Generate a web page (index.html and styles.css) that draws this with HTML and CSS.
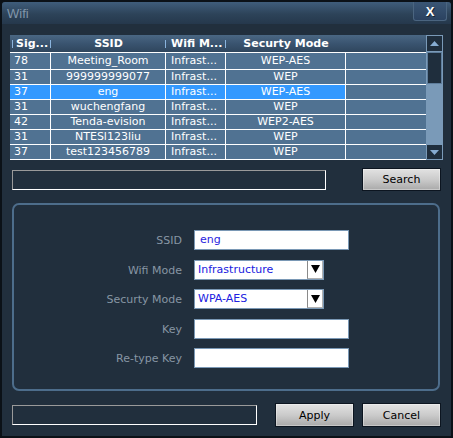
FILE: index.html
```html
<!DOCTYPE html>
<html>
<head>
<meta charset="utf-8">
<link rel="stylesheet" href="styles.css">
</head>
<body>
<div class="window">
  <div class="titlebar">
    <span class="title">Wifi</span>
    <div class="close">X</div>
  </div>
  <div class="content">
    <div class="list">
      <div class="grid">
        <div class="row head">
          <div class="c c1">Sig...</div>
          <div class="c c2">SSID</div>
          <div class="c c3">Wifi M...</div>
          <div class="c c4">Securty Mode</div>
          <div class="c c5"></div>
        </div>
        <div class="row first">
          <div class="c c1">78</div><div class="c c2">Meeting_Room</div><div class="c c3">Infrast...</div><div class="c c4">WEP-AES</div><div class="c c5"></div>
        </div>
        <div class="row">
          <div class="c c1">31</div><div class="c c2">999999999077</div><div class="c c3">Infrast...</div><div class="c c4">WEP</div><div class="c c5"></div>
        </div>
        <div class="row sel">
          <div class="c c1">37</div><div class="c c2">eng</div><div class="c c3">Infrast...</div><div class="c c4">WEP-AES</div><div class="c c5"></div>
        </div>
        <div class="row">
          <div class="c c1">31</div><div class="c c2">wuchengfang</div><div class="c c3">Infrast...</div><div class="c c4">WEP</div><div class="c c5"></div>
        </div>
        <div class="row">
          <div class="c c1">42</div><div class="c c2">Tenda-evision</div><div class="c c3">Infrast...</div><div class="c c4">WEP2-AES</div><div class="c c5"></div>
        </div>
        <div class="row">
          <div class="c c1">31</div><div class="c c2">NTESl123liu</div><div class="c c3">Infrast...</div><div class="c c4">WEP</div><div class="c c5"></div>
        </div>
        <div class="row">
          <div class="c c1">37</div><div class="c c2">test123456789</div><div class="c c3">Infrast...</div><div class="c c4">WEP</div><div class="c c5"></div>
        </div>
      </div>
      <div class="scrollbar">
        <div class="sb-btn up"><svg width="9" height="5" viewBox="0 0 9 5"><path d="M0 5 L4.5 0 L9 5 Z" fill="#86acd2"/></svg></div>
        <div class="sb-track"><div class="sb-thumb"></div></div>
        <div class="sb-btn down"><svg width="9" height="5" viewBox="0 0 9 5"><path d="M0 0 L4.5 5 L9 0 Z" fill="#86acd2"/></svg></div>
      </div>
    </div>

    <div class="search-row">
      <div class="sunken search-field"></div>
      <div class="btn">Search</div>
    </div>

    <div class="group">
      <div class="label">SSID</div>
      <div class="input">eng</div>
      <div class="label">Wifi Mode</div>
      <div class="select"><span class="val">Infrastructure</span><span class="dd"><svg width="9" height="8" viewBox="0 0 9 8"><path d="M0 0 H9 L4.5 8 Z" fill="#000"/></svg></span></div>
      <div class="label">Securty Mode</div>
      <div class="select"><span class="val">WPA-AES</span><span class="dd"><svg width="9" height="8" viewBox="0 0 9 8"><path d="M0 0 H9 L4.5 8 Z" fill="#000"/></svg></span></div>
      <div class="label">Key</div>
      <div class="input"></div>
      <div class="label">Re-type Key</div>
      <div class="input"></div>
    </div>

    <div class="bottom-row">
      <div class="sunken status-field"></div>
      <div class="btn apply">Apply</div>
      <div class="btn cancel">Cancel</div>
    </div>
  </div>
</div>
</body>
</html>
```
FILE: styles.css
```css
* { box-sizing: border-box; }
html, body { margin: 0; padding: 0; background: #0c1116; }
body {
  width: 453px;
  height: 438px;
  overflow: hidden;
  font-family: "DejaVu Sans", sans-serif;
  font-size: 11px;
}
.window {
  width: 453px;
  height: 438px;
  border: 2px solid #0b1117;
  border-radius: 5px 5px 2px 2px;
  background: #212f3d;
  display: flex;
  flex-direction: column;
  overflow: hidden;
}
.titlebar {
  height: 22px;
  flex: none;
  display: flex;
  align-items: center;
  background: linear-gradient(#3f5d7b, #2d4359 55%, #25384c);
}
.title {
  font-family: "Liberation Sans", sans-serif;
  font-size: 13px;
  color: #8196aa;
  padding-left: 5px;
}
.close {
  margin-left: auto;
  margin-right: 4px;
  align-self: flex-start;
  width: 34px;
  height: 19px;
  border: 1px solid #4b6580;
  border-top: none;
  border-radius: 0 0 3px 3px;
  background: linear-gradient(#3a5675, #2b4260);
  color: #fff;
  font-family: "Liberation Sans", sans-serif;
  font-weight: bold;
  font-size: 13px;
  display: flex;
  align-items: center;
  justify-content: center;
  text-shadow: 1px 1px 0 #1a2633;
}
.content {
  padding: 11px 8px 0 8px;
  display: flex;
  flex-direction: column;
}
.list {
  display: flex;
  height: 125px;
}
.grid {
  flex: 1;
  display: flex;
  flex-direction: column;
  background: #507292;
}
.row {
  display: grid;
  grid-template-columns: 41px 115px 60px 120px 1fr;
  height: 15px;
  border-bottom: 1px solid #fff;
  color: #fff;
  line-height: 14px;
}
.row.first { height: 17px; line-height: 16px; }
.row.head {
  height: 18px;
  line-height: 17px;
  background: linear-gradient(#4a6783, #3a5470 50%, #2f465d);
  font-weight: bold;
}
.c {
  white-space: nowrap;
  overflow: hidden;
  border-right: 1px solid #fff;
}
.c5 { border-right: none; }
.c1 { padding-left: 4px; }
.c2, .c4 { text-align: center; }
.c3 { padding-left: 5px; }
.head .c { border-right: none; }
.head .c1 {
  padding-left: 6px;
  background:
    linear-gradient(#8ab4de, #8ab4de) no-repeat 2px 50% / 1px 8px,
    linear-gradient(#8ab4de, #8ab4de) no-repeat 100% 50% / 1px 8px;
}
.head .c2, .head .c3 {
  background: linear-gradient(#8ab4de, #8ab4de) no-repeat 100% 50% / 1px 8px;
}
.sel .c1, .sel .c2, .sel .c3, .sel .c4 { background: #3399ff; }
.scrollbar {
  width: 17px;
  display: flex;
  flex-direction: column;
  background: #7a9ab8;
}
.sb-btn {
  height: 17px;
  background: #1f2e3d;
  border: 1px solid #7a9ab8;
  display: flex;
  align-items: center;
  justify-content: center;
}
.sb-btn.down { height: 16px; }
.sb-track {
  flex: 1;
  padding: 0 1px;
}
.sb-thumb {
  height: 32px;
  background: #1f2e3d;
  border: 1px solid #5e7d9b;
}
.search-row {
  margin-top: 8px;
  height: 23px;
  display: flex;
  align-items: center;
  justify-content: space-between;
  padding: 0 2px;
}
.sunken {
  height: 20px;
  border: 1px solid;
  border-color: #9a9a9a #fff #fff #9a9a9a;
}
.search-field { width: 314px; }
.btn {
  width: 79px;
  height: 23px;
  border: 1px solid #0c1520;
  background: linear-gradient(#e2e2e2, #cbcbcb 50%, #a9a9a9);
  box-shadow: inset 0 0 0 1px rgba(255,255,255,0.35);
  color: #000;
  display: flex;
  align-items: center;
  justify-content: center;
  font-size: 11px;
}
.group {
  margin: 12px 3px 0 2px;
  height: 188px;
  border: 2px solid #4d6d8b;
  border-radius: 7px;
  padding-top: 25px;
  display: grid;
  grid-template-columns: 168px 155px;
  grid-auto-rows: 20px;
  column-gap: 12px;
  row-gap: 9.5px;
  align-content: start;
}
.label {
  color: #8796a4;
  text-align: right;
  line-height: 22px;
}
.input {
  height: 20px;
  background: #fff;
  border: 1px solid #7a98b5;
  color: #2a1de0;
  padding-left: 5px;
  line-height: 18px;
}
.select {
  width: 130px;
  height: 20px;
  background: #fff;
  border: 1px solid #7a98b5;
  color: #2020e0;
  display: flex;
  line-height: 18px;
}
.val { flex: 1; padding-left: 3px; }
.dd {
  width: 16px;
  border-left: 1px solid #8a8a8a;
  border-bottom: 1px solid #b0b0b0;
  border-right: 1px solid #b0b0b0;
  display: flex;
  align-items: center;
  justify-content: center;
}
.bottom-row {
  margin-top: 12px;
  height: 24px;
  display: flex;
  align-items: center;
  padding-left: 2px;
}
.status-field { width: 245px; }
.apply { margin-left: 18px; height: 24px; }
.cancel { margin-left: 8px; height: 24px; }
```
